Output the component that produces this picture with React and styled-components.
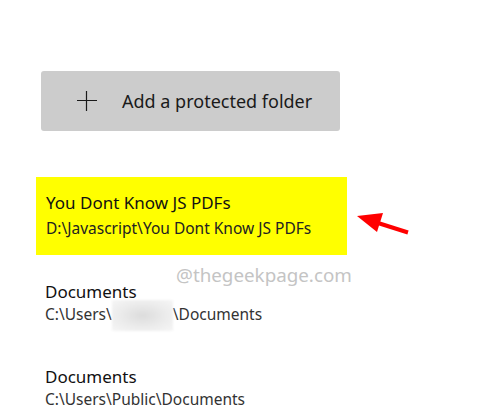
import React from 'react'
import styled, { createGlobalStyle } from 'styled-components'

const GlobalStyle = createGlobalStyle`
  html, body {
    margin: 0;
    padding: 0;
    background: #ffffff;
    font-family: "Segoe UI", "Noto Sans", "Open Sans", sans-serif;
  }
`

const Page = styled.div`
  position: relative;
  width: 483px;
  height: 415px;
  overflow: hidden;
  padding: 71px 0 0 36px;
  box-sizing: border-box;
`

const AddButton = styled.button`
  display: flex;
  align-items: center;
  gap: 25px;
  margin-left: 5px;
  width: 299px;
  height: 60px;
  padding: 0 0 0 36px;
  border: none;
  border-radius: 3px;
  background: #cccccc;
  color: #1a1a1a;
  font-family: inherit;
  font-size: 18px;
  cursor: pointer;
`

const List = styled.div`
  display: flex;
  flex-direction: column;
  margin-top: 46px;
`

const Item = styled.div`
  width: 311px;
  box-sizing: border-box;
  padding: ${(p) => (p.$highlight ? '15px 10px 16px' : '0 9px')};
  margin-bottom: ${(p) => (p.$highlight ? '26px' : '41px')};
  background: ${(p) => (p.$highlight ? '#ffff00' : 'transparent')};
`

const Title = styled.div`
  font-size: 17px;
  line-height: 22px;
  color: #111;
`

const Path = styled.div`
  margin-top: ${(p) => (p.$dark ? '3px' : '0')};
  font-size: 15.5px;
  line-height: 22px;
  color: ${(p) => (p.$dark ? '#222' : '#333')};
  white-space: nowrap;
`

const Blurred = styled.span`
  display: inline-block;
  width: 61px;
  height: 31px;
  vertical-align: middle;
  margin: -8px 0;
  background: radial-gradient(ellipse at center, #dcdcdc 0%, #ececec 55%, #f6f6f6 100%);
  filter: blur(1px);
`

const Watermark = styled.div`
  position: absolute;
  left: 176px;
  top: 262px;
  font-size: 18.8px;
  color: #c4c4c4;
`

const Arrow = styled.svg`
  position: absolute;
  left: 350px;
  top: 205px;
`

const PlusIcon = () => (
  <svg width="20" height="20" viewBox="0 0 20 20">
    <path d="M0 9.5H20M9.5 0V20" stroke="#1a1a1a" strokeWidth="1.2" />
  </svg>
)

export default function App() {
  return (
    <>
      <GlobalStyle />
      <Page>
        <AddButton>
          <PlusIcon />
          Add a protected folder
        </AddButton>
        <List>
          <Item $highlight>
            <Title>You Dont Know JS PDFs</Title>
            <Path $dark>D:\Javascript\You Dont Know JS PDFs</Path>
          </Item>
          <Item>
            <Title>Documents</Title>
            <Path>
              C:\Users\<Blurred />\Documents
            </Path>
          </Item>
          <Item>
            <Title>Documents</Title>
            <Path>C:\Users\Public\Documents</Path>
          </Item>
        </List>
        <Watermark>@thegeekpage.com</Watermark>
        <Arrow width="70" height="40" viewBox="0 0 70 40">
          <path d="M58 27.5L28 18" stroke="#ff0000" strokeWidth="4" />
          <polygon points="7,11 33,8 27,27" fill="#ff0000" />
        </Arrow>
      </Page>
    </>
  )
}
